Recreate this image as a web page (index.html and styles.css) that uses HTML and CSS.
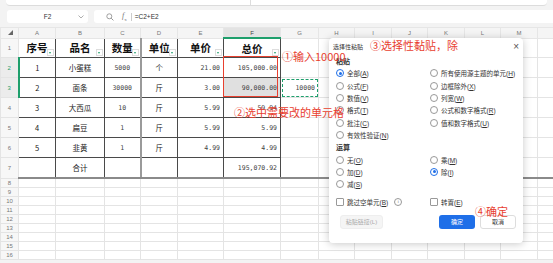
FILE: index.html
```html
<!DOCTYPE html>
<html lang="zh-CN">
<head>
    <meta charset="UTF-8">
    <title>选择性粘贴 - 除</title>
    <link rel="stylesheet" href="styles.css">
</head>
<body>
    <div class="toolbar-edge">
        <div class="toolbar-left"></div>
        <div class="toolbar-right"></div>
    </div>

    <div class="formula-bar">
        <div class="name-box">
            <span>F2</span>
            <svg class="chev" width="6" height="4" viewBox="0 0 6 4"><path d="M0.5 0.5 L3 3 L5.5 0.5" fill="none" stroke="#999" stroke-width="0.8"/></svg>
        </div>
        <div class="formula-box">
            <svg class="ico" width="8" height="8" viewBox="0 0 8 8"><circle cx="3.3" cy="3.3" r="2.5" fill="none" stroke="#888" stroke-width="0.8"/><path d="M5.2 5.2 L7.4 7.4" stroke="#888" stroke-width="0.9"/></svg>
            <span class="fx"><i>f</i><sub>x</sub></span>
            <span class="sep"></span>
            <span class="formula">=C2+E2</span>
        </div>
    </div>

    <div class="sheet">
        <table class="grid">
            <colgroup>
                <col style="width:18px"><col style="width:37px"><col style="width:49px"><col style="width:36px">
                <col style="width:37px"><col style="width:46px"><col style="width:57px"><col style="width:38px">
                <col style="width:36px"><col style="width:37px"><col style="width:36px"><col style="width:37px">
                <col style="width:36px"><col style="width:37px"><col style="width:16px">
            </colgroup>
            <tr class="col-head">
                <th class="corner"><svg width="5" height="5" viewBox="0 0 5 5"><path d="M5 0 L5 5 L0 5 Z" fill="#666"/></svg></th>
                <th>A</th><th>B</th><th>C</th><th>D</th><th>E</th><th class="cur">F</th><th>G</th>
                <th>H</th><th>I</th><th>J</th><th>K</th><th>L</th><th>M</th><th></th>
            </tr>
            <tr class="r-title">
                <th class="rh">1</th>
                <td class="t head">序号<span class="flt"></span></td>
                <td class="t head">品名<span class="flt"></span></td>
                <td class="t head">数量<span class="flt"></span></td>
                <td class="t head dcol">单位<span class="flt"></span></td>
                <td class="t head">单价<span class="flt"></span></td>
                <td class="t head tr">总价<span class="flt"></span></td>
                <td></td><td></td><td></td><td></td><td></td><td></td><td></td><td></td>
            </tr>
            <tr class="r-data">
                <th class="rh sel">2</th>
                <td class="t c">1</td><td class="t c">小蛋糕</td><td class="t c num">5000</td><td class="t c dcol">个</td>
                <td class="t r num">21.00</td><td class="t r num tr active">105,000.00</td>
                <td></td><td></td><td></td><td></td><td></td><td></td><td></td><td></td>
            </tr>
            <tr class="r-data">
                <th class="rh sel">3</th>
                <td class="t c">2</td><td class="t c">面条</td><td class="t c num">30000</td><td class="t c dcol">斤</td>
                <td class="t r num">3.00</td><td class="t r num tr ranged">90,000.00</td>
                <td class="r num copied">10000</td><td></td><td></td><td></td><td></td><td></td><td></td><td></td>
            </tr>
            <tr class="r-data">
                <th class="rh">4</th>
                <td class="t c">3</td><td class="t c">大西瓜</td><td class="t c num">10</td><td class="t c dcol">斤</td>
                <td class="t r num">5.99</td><td class="t r num tr">59.94</td>
                <td></td><td></td><td></td><td></td><td></td><td></td><td></td><td></td>
            </tr>
            <tr class="r-data">
                <th class="rh">5</th>
                <td class="t c">4</td><td class="t c">扁豆</td><td class="t c num">1</td><td class="t c dcol">斤</td>
                <td class="t r num">5.99</td><td class="t r num tr">5.99</td>
                <td></td><td></td><td></td><td></td><td></td><td></td><td></td><td></td>
            </tr>
            <tr class="r-data">
                <th class="rh">6</th>
                <td class="t c">5</td><td class="t c">韭黄</td><td class="t c num">1</td><td class="t c dcol">斤</td>
                <td class="t r num">4.99</td><td class="t r num tr">4.99</td>
                <td></td><td></td><td></td><td></td><td></td><td></td><td></td><td></td>
            </tr>
            <tr class="r-data r-total">
                <th class="rh">7</th>
                <td class="t c"></td><td class="t c">合计</td><td class="t c"></td><td class="t c dcol"></td>
                <td class="t r"></td><td class="t r num tr">195,070.92</td>
                <td></td><td></td><td></td><td></td><td></td><td></td><td></td><td></td>
            </tr>
            <tr class="r-empty"><th class="rh">8</th><td></td><td></td><td></td><td></td><td></td><td></td><td></td><td></td><td></td><td></td><td></td><td></td><td></td><td></td></tr>
            <tr class="r-empty"><th class="rh">9</th><td></td><td></td><td></td><td></td><td></td><td></td><td></td><td></td><td></td><td></td><td></td><td></td><td></td><td></td></tr>
            <tr class="r-empty"><th class="rh">10</th><td></td><td></td><td></td><td></td><td></td><td></td><td></td><td></td><td></td><td></td><td></td><td></td><td></td><td></td></tr>
            <tr class="r-empty"><th class="rh">11</th><td></td><td></td><td></td><td></td><td></td><td></td><td></td><td></td><td></td><td></td><td></td><td></td><td></td><td></td></tr>
            <tr class="r-empty"><th class="rh">12</th><td></td><td></td><td></td><td></td><td></td><td></td><td></td><td></td><td></td><td></td><td></td><td></td><td></td><td></td></tr>
            <tr class="r-empty"><th class="rh">13</th><td></td><td></td><td></td><td></td><td></td><td></td><td></td><td></td><td></td><td></td><td></td><td></td><td></td><td></td></tr>
            <tr class="r-empty"><th class="rh">14</th><td></td><td></td><td></td><td></td><td></td><td></td><td></td><td></td><td></td><td></td><td></td><td></td><td></td><td></td></tr>
            <tr class="r-empty"><th class="rh">15</th><td></td><td></td><td></td><td></td><td></td><td></td><td></td><td></td><td></td><td></td><td></td><td></td><td></td><td></td></tr>
            <tr class="r-empty"><th class="rh">16</th><td></td><td></td><td></td><td></td><td></td><td></td><td></td><td></td><td></td><td></td><td></td><td></td><td></td><td></td></tr>
        </table>

        <!-- red mark round F2:F3 -->
        <div class="mark-box"></div>

        <!-- paste special dialog -->
        <div class="dialog">
            <div class="dlg-title">
                <span>选择性粘贴</span>
                <span class="close">×</span>
            </div>
            <div class="dlg-body">
                <div class="section">粘贴</div>
                <div class="opts">
                    <label class="opt"><span class="radio on"></span><span>全部(<u>A</u>)</span></label>
                    <label class="opt"><span class="radio"></span><span>所有使用源主题的单元(<u>H</u>)</span></label>
                    <label class="opt"><span class="radio"></span><span>公式(<u>F</u>)</span></label>
                    <label class="opt"><span class="radio"></span><span>边框除外(<u>X</u>)</span></label>
                    <label class="opt"><span class="radio"></span><span>数值(<u>V</u>)</span></label>
                    <label class="opt"><span class="radio"></span><span>列宽(<u>W</u>)</span></label>
                    <label class="opt"><span class="radio"></span><span>格式(<u>T</u>)</span></label>
                    <label class="opt"><span class="radio"></span><span>公式和数字格式(<u>R</u>)</span></label>
                    <label class="opt"><span class="radio"></span><span>批注(<u>C</u>)</span></label>
                    <label class="opt"><span class="radio"></span><span>值和数字格式(<u>U</u>)</span></label>
                    <label class="opt"><span class="radio"></span><span>有效性验证(<u>N</u>)</span></label>
                    <span></span>
                </div>
                <div class="section op">运算</div>
                <div class="opts">
                    <label class="opt"><span class="radio"></span><span>无(<u>O</u>)</span></label>
                    <label class="opt"><span class="radio"></span><span>乘(<u>M</u>)</span></label>
                    <label class="opt"><span class="radio"></span><span>加(<u>D</u>)</span></label>
                    <label class="opt"><span class="radio on"></span><span>除(<u>I</u>)</span></label>
                    <label class="opt"><span class="radio"></span><span>减(<u>S</u>)</span></label>
                    <span></span>
                </div>
                <div class="opts checks">
                    <label class="opt"><span class="box"></span><span>跳过空单元(<u>B</u>)</span><span class="info">i</span></label>
                    <label class="opt"><span class="box"></span><span>转置(<u>E</u>)</span></label>
                </div>
                <div class="dlg-foot">
                    <button class="btn ghost">粘贴链接(L)</button>
                    <div class="foot-right">
                        <button class="btn primary">确定</button>
                        <button class="btn plain">取消</button>
                    </div>
                </div>
            </div>
        </div>

        <div class="note n1">①输入10000</div>
        <div class="note n2">②选中需要改的单元格</div>
        <div class="note n3">③选择性黏贴，除</div>
        <div class="note n4">④确定</div>
    </div>
</body>
</html>
```

FILE: styles.css
```css
:root {
    --grid-line: #e4e4e4;
    --table-line: #4a4a4a;
    --green: #1e9f6c;
    --blue: #1f6fe8;
    --note-red: #e8402f;
}

body, html {
    margin: 0;
    padding: 0;
    background: #f3f3f3;
    font-family: "Noto Sans CJK SC", "Noto Sans", sans-serif;
    color: #333;
    width: 553px;
    height: 263px;
    overflow: hidden;
}

.toolbar-edge {
    display: flex;
    height: 5px;
    background: #fff;
    border-bottom: 1px solid #dcdcdc;
    margin: 0 6px;
    border-radius: 0 0 4px 4px;
}

.toolbar-left {
    width: 244px;
    border-right: 1px solid #ddd;
}

.formula-bar {
    display: flex;
    gap: 6px;
    padding: 4px 0 4px 7px;
}

.name-box {
    width: 81px;
    height: 13px;
    background: #fff;
    border-radius: 3px;
    display: flex;
    align-items: center;
    justify-content: center;
    position: relative;
    font-family: "Liberation Sans", sans-serif;
    font-size: 6.5px;
    color: #333;
}

.name-box .chev {
    position: absolute;
    right: 4px;
    top: 5px;
}

.formula-box {
    flex: 1;
    height: 13px;
    background: #fff;
    border-radius: 3px 0 0 3px;
    display: flex;
    align-items: center;
    padding-left: 12px;
    font-size: 6.5px;
}

.formula-box .ico {
    margin-right: 8px;
}

.fx {
    font-family: "Liberation Serif", serif;
    color: #777;
    font-size: 8px;
}

.fx sub {
    font-size: 5px;
}

.sep {
    width: 1px;
    height: 8px;
    background: #ccc;
    margin: 0 3px 0 4px;
}

.formula {
    font-family: "Liberation Sans", sans-serif;
    color: #333;
}

/* sheet */
.sheet {
    position: relative;
    background: #fff;
}

.grid {
    border-collapse: collapse;
    table-layout: fixed;
    width: 553px;
}

.grid td, .grid th {
    padding: 0;
    border: 1px solid var(--grid-line);
    overflow: hidden;
    white-space: nowrap;
}

.col-head th {
    height: 9px;
    background: #f5f5f5;
    font-family: "Liberation Sans", sans-serif;
    font-weight: normal;
    font-size: 6px;
    color: #777;
    border-color: #e6e6e6;
}

.col-head th.cur {
    background: #e3e3e3;
    border-bottom: 2px solid var(--green);
    color: #444;
}

.corner svg {
    display: block;
    margin: 0 0 0 7px;
}

.rh {
    background: #f7f7f7;
    font-family: "Liberation Sans", sans-serif;
    font-weight: normal;
    font-size: 6px;
    color: #777;
    border-color: #e8e8e8;
}

.rh.sel {
    color: var(--green);
    background: #ececec;
    border-right: 2px solid var(--green);
}

.r-title td, .r-title th { height: 18px; }
.r-data td, .r-data th { height: 19px; }
.r-empty td, .r-empty th {
    height: 8px;
    font-size: 6px;
    line-height: 8px;
}

.t {
    border-color: var(--table-line) !important;
    font-size: 7.5px;
    color: #222;
}

.t.head {
    position: relative;
    text-align: center;
    font-size: 10.5px;
    font-weight: bold;
    color: #111;
}

.flt {
    position: absolute;
    right: 1px;
    bottom: 1px;
    width: 5px;
    height: 5px;
    border: 1px solid #ddd;
    background: #fff;
}

.flt::after {
    content: "";
    position: absolute;
    left: 1px;
    top: 2px;
    border-left: 1.5px solid transparent;
    border-right: 1.5px solid transparent;
    border-top: 2px solid var(--green);
}

.c { text-align: center; }
.r { text-align: right; padding-right: 3px !important; }

.num {
    font-family: "DejaVu Sans Mono", monospace;
    font-size: 6.5px;
    color: #444;
}

.dcol {
    border-left: 2px solid #9a9a9a !important;
}

.tr {
    border-right: 1px solid var(--table-line) !important;
}

.ranged {
    background: #e0e0e0;
}

.r-total td {
    border-bottom: 2px solid #8a8a8a !important;
}

.copied {
    outline: 1px dashed var(--green);
    outline-offset: -2px;
}

.mark-box {
    position: absolute;
    left: 223px;
    top: 29px;
    width: 53px;
    height: 39px;
    border: 1.5px solid var(--note-red);
}

/* dialog */
.dialog {
    position: absolute;
    left: 329px;
    top: 11px;
    width: 194px;
    height: 205px;
    background: #fff;
    border-radius: 4px;
    box-shadow: 0 1px 8px rgba(0, 0, 0, 0.22);
    font-family: "Liberation Sans", "Noto Sans CJK SC", sans-serif;
    font-size: 6.5px;
    color: #333;
}

.dlg-title {
    display: flex;
    justify-content: space-between;
    align-items: center;
    height: 14px;
    padding: 0 4px 0 4px;
    font-size: 6px;
    margin-top: 1px;
}

.close {
    font-size: 10px;
    color: #555;
}

.dlg-body {
    padding: 0 7px;
}

.section {
    font-weight: bold;
    font-size: 7px;
    margin-top: 4px;
    height: 10px;
    line-height: 10px;
}

.section.op {
    margin-top: 2px;
}

.opts {
    display: grid;
    grid-template-columns: 94px 1fr;
    grid-auto-rows: 12.4px;
}

.opt {
    display: flex;
    align-items: center;
    gap: 3px;
    white-space: nowrap;
}

.opt u {
    text-decoration: underline;
}

.radio {
    width: 6px;
    height: 6px;
    border: 1px solid #999;
    border-radius: 50%;
    position: relative;
    flex: none;
}

.radio.on {
    border-color: var(--blue);
}

.radio.on::after {
    content: "";
    position: absolute;
    left: 1.5px;
    top: 1.5px;
    width: 3px;
    height: 3px;
    border-radius: 50%;
    background: var(--blue);
}

.checks {
    margin-top: 5px;
}

.box {
    width: 6px;
    height: 6px;
    border: 1px solid #999;
    border-radius: 1px;
    flex: none;
}

.info {
    width: 6px;
    height: 6px;
    border: 0.8px solid #999;
    border-radius: 50%;
    font-family: "Liberation Serif", serif;
    font-size: 5px;
    line-height: 6px;
    text-align: center;
    color: #888;
    margin-left: 3px;
}

.dlg-foot {
    display: flex;
    justify-content: space-between;
    align-items: center;
    margin-top: 7px;
    padding-left: 4px;
}

.foot-right {
    display: flex;
    gap: 5px;
}

.btn {
    height: 14px;
    padding: 0;
    border-radius: 3px;
    font-family: "Liberation Sans", "Noto Sans CJK SC", sans-serif;
    font-size: 6px;
}

.btn.ghost {
    width: 43px;
    background: #f5f5f5;
    border: 1px solid #eee;
    color: #aaa;
}

.btn.primary {
    width: 36px;
    background: var(--blue);
    border: none;
    color: #fff;
}

.btn.plain {
    width: 36px;
    background: #fff;
    border: 1px solid #ddd;
    color: #333;
}

/* red notes */
.note {
    position: absolute;
    color: var(--note-red);
    font-size: 11px;
    line-height: 12px;
    white-space: nowrap;
}

.n1 { left: 282px; top: 23px; }
.n2 { left: 234px; top: 79px; }
.n3 { left: 370px; top: 12px; }
.n4 { left: 475px; top: 178px; }
```
